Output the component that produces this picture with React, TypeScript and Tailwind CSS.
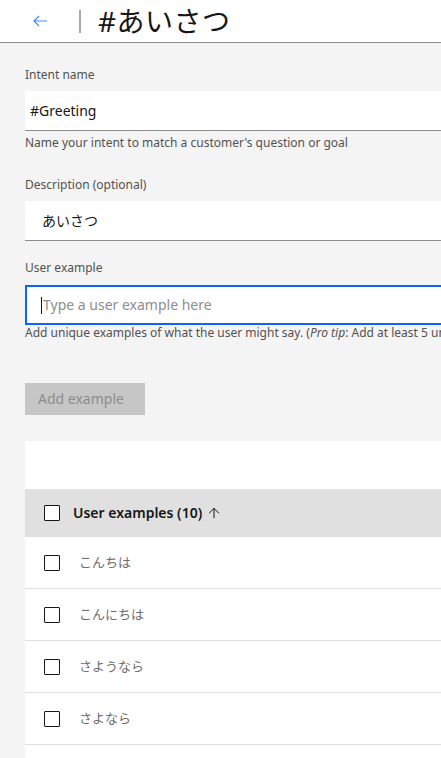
import { ArrowUp } from 'lucide-react'

const examples = ['こんちは', 'こんにちは', 'さようなら', 'さよなら', 'おはよう']

function Box() {
  return <span className="block h-4 w-4 shrink-0 rounded-[1px] border border-[#161616] bg-white" />
}

function Label({ children }: { children: React.ReactNode }) {
  return <p className="h-4 text-xs leading-4 text-[#525252]">{children}</p>
}

export default function App() {
  const font = { fontFamily: '"Noto Sans", "Noto Sans CJK JP", sans-serif' }
  return (
    <div className="min-h-screen w-full overflow-hidden bg-[#f4f4f4]" style={font}>
      <header className="flex h-[43px] items-center border-b border-[#8d8d8d] bg-white">
        <svg className="ml-[33px] h-[14px] w-[14px] text-[#4589ff]" viewBox="0 0 14 14" fill="none" stroke="currentColor" strokeWidth="1.2">
          <path d="M1 7h13M6 2L1 7l5 5" />
        </svg>
        <span className="ml-[32px] h-[23px] w-[2px] bg-[#a8a8a8]" />
        <h1 className="ml-[17px] text-[28px] font-normal leading-none tracking-[0.5px] text-[#161616]">#あいさつ</h1>
      </header>

      <main className="w-[640px] pl-[25px] pt-[24px]">
        <Label>Intent name</Label>
        <div className="mt-2 flex h-[40px] items-center border-b border-[#8d8d8d] bg-white pl-[5px] text-sm text-[#161616]">
          #Greeting
        </div>
        <p className="mt-[4px] h-4 text-xs leading-4 text-[#525252]">Name your intent to match a customer's question or goal</p>

        <div className="mt-[26px]">
          <Label>Description (optional)</Label>
        </div>
        <div className="mt-2 flex h-[40px] items-center border-b border-[#8d8d8d] bg-white pl-[17px] text-sm text-[#161616]">
          あいさつ
        </div>

        <div className="mt-[19px]">
          <Label>User example</Label>
        </div>
        <div className="mt-[9px] flex h-[40px] items-center border-2 border-[#0f62fe] bg-white pl-[14px] text-sm text-[#8d8d8d]">
          <span className="mr-[1px] h-[17px] w-px bg-[#161616]" />
          Type a user example here
        </div>
        <p className="h-4 whitespace-nowrap text-xs leading-4 text-[#525252]">
          Add unique examples of what the user might say. (<i>Pro tip</i>: Add at least 5 unique examples to help Watson understand.)
        </p>

        <button className="mt-[42px] flex h-[32px] w-[120px] items-center bg-[#c6c6c6] pl-[13px] text-sm text-[#8d8d8d]">
          Add example
        </button>

        <section className="mt-[26px] bg-white">
          <div className="h-[48px]" />
          <div className="flex h-[48px] items-center bg-[#e0e0e0] pl-[19px]">
            <Box />
            <span className="ml-[13px] text-sm font-semibold text-[#161616]">User examples (10)</span>
            <ArrowUp className="ml-[4px] h-4 w-4 text-[#161616]" strokeWidth={1.5} />
          </div>
          {examples.map((e) => (
            <div key={e} className="flex h-[52px] items-center border-b border-[#e0e0e0] pl-[19px]">
              <Box />
              <span className="ml-[19px] text-[13px] text-[#6f6f6f]">{e}</span>
            </div>
          ))}
        </section>
      </main>
    </div>
  )
}
